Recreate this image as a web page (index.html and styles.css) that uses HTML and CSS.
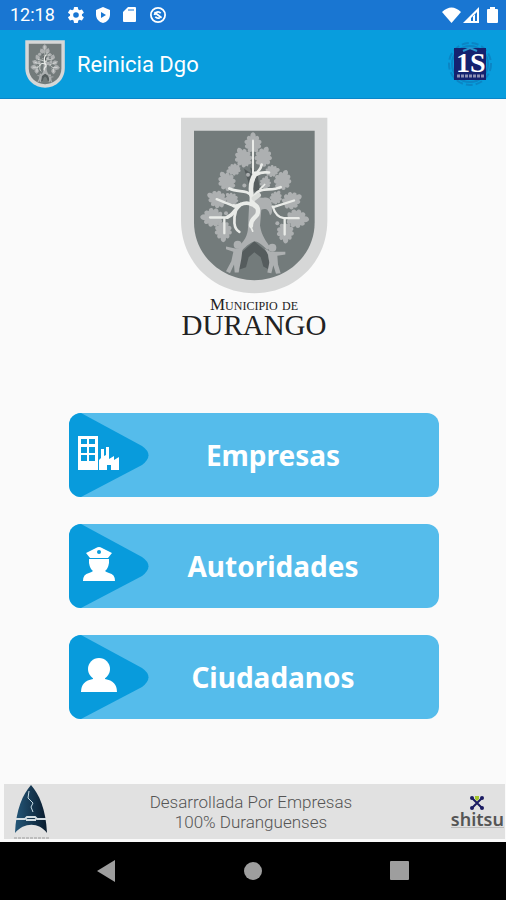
FILE: index.html
```html
<!DOCTYPE html>
<html lang="es">
<head>
    <meta charset="UTF-8">
    <meta name="viewport" content="width=device-width, initial-scale=1.0">
    <title>Reinicia Dgo</title>
    <link rel="stylesheet" href="styles.css">
</head>
<body>
    <!-- Shared drawings -->
    <svg class="defs" width="0" height="0" aria-hidden="true">
        <symbol id="leaf" viewBox="-24 -60 48 60" overflow="visible">
            <path d="M0 0 L-4 -5 C-12 0 -20 -6 -14 -14 C-23 -11 -29 -22 -20 -27 C-29 -30 -26 -42 -17 -40 C-22 -49 -13 -56 -8 -50 C-9 -58 -4 -63 0 -63 C4 -63 9 -58 8 -50 C13 -56 22 -49 17 -40 C26 -42 29 -30 20 -27 C29 -22 23 -11 14 -14 C20 -6 12 0 4 -5 Z"/>
        </symbol>
        <symbol id="shield" viewBox="30 20 444 530">
            <path fill="#d6d7d7" d="M33 22 H472 V330 C472 455 375 548 253 548 C130 548 33 455 33 330 Z"/>
            <path fill="#737b7b" d="M72 61 H434 V335 C434 435 350 509 253 509 C156 509 72 435 72 335 Z"/>
            <path fill="#555c5d" d="M222 175 L245 190 L240 170 L262 185 L270 240 L245 245 Z M200 480 L215 425 L253 392 L292 425 L302 480 L280 468 L272 440 L253 425 L236 440 L228 470 Z"/>
            <g fill="#adb0b1">
                <g transform="translate(249 128)"><use href="#leaf" x="-24" y="-60" width="48" height="60"/></g>
                <g transform="translate(234 168) rotate(-28)"><use href="#leaf" x="-24" y="-60" width="48" height="60"/></g>
                <g transform="translate(270 168) rotate(20)"><use href="#leaf" x="-24" y="-60" width="48" height="60"/></g>
                <g transform="translate(212 172) rotate(-105) scale(.7)"><use href="#leaf" x="-24" y="-60" width="48" height="60"/></g>
                <g transform="translate(286 186) rotate(78) scale(.7)"><use href="#leaf" x="-24" y="-60" width="48" height="60"/></g>
                <g transform="translate(186 238) rotate(-32)"><use href="#leaf" x="-24" y="-60" width="48" height="60"/></g>
                <g transform="translate(328 238) rotate(20)"><use href="#leaf" x="-24" y="-60" width="48" height="60"/></g>
                <g transform="translate(282 236) rotate(12) scale(.65)"><use href="#leaf" x="-24" y="-60" width="48" height="60"/></g>
                <g transform="translate(168 280) rotate(-62)"><use href="#leaf" x="-24" y="-60" width="48" height="60"/></g>
                <g transform="translate(200 280) rotate(-45) scale(.7)"><use href="#leaf" x="-24" y="-60" width="48" height="60"/></g>
                <g transform="translate(338 283) rotate(64)"><use href="#leaf" x="-24" y="-60" width="48" height="60"/></g>
                <g transform="translate(308 280) rotate(28) scale(.7)"><use href="#leaf" x="-24" y="-60" width="48" height="60"/></g>
                <g transform="translate(160 322) rotate(-88) scale(1.1)"><use href="#leaf" x="-24" y="-60" width="48" height="60"/></g>
                <g transform="translate(348 322) rotate(94) scale(1.1)"><use href="#leaf" x="-24" y="-60" width="48" height="60"/></g>
                <g transform="translate(160 332) rotate(180)"><use href="#leaf" x="-24" y="-60" width="48" height="60"/></g>
                <g transform="translate(345 336) rotate(178)"><use href="#leaf" x="-24" y="-60" width="48" height="60"/></g>
                <circle cx="234" cy="193" r="6"/>
                <circle cx="223" cy="225" r="6"/>
                <circle cx="168" cy="308" r="6"/>
                <circle cx="322" cy="338" r="6"/>
                <!-- trunk -->
                <path d="M238 270 C250 250 268 262 280 262 C300 258 304 270 306 285 C304 298 310 308 300 314 C296 296 286 292 274 298 L270 345 C274 375 290 395 302 412 L292 418 C276 402 262 392 253 392 C240 396 222 412 212 424 L204 410 C222 392 234 375 234 350 Z"/>
                <!-- children -->
                <circle cx="203" cy="403" r="12"/>
                <path d="M168 408 L196 414 L218 412 L214 445 L206 486 L194 486 L192 462 L180 488 L168 482 L184 452 L190 424 L168 416 Z"/>
                <circle cx="307" cy="412" r="12"/>
                <path d="M284 414 L302 424 L346 424 L346 432 L322 436 L324 462 L332 488 L318 490 L310 464 L304 488 L292 486 L298 456 L294 432 Z"/>
            </g>
            <g fill="none" stroke="#e9ebe8" stroke-linecap="round" stroke-linejoin="round">
                <path stroke-width="6" d="M249 90 V188"/>
                <path stroke-width="8" d="M275 162 C272 178 262 186 254 192 M262 192 C275 182 286 186 297 186"/>
                <path stroke-width="14" d="M256 190 C242 210 240 235 246 262 C244 276 250 283 258 288"/>
                <path stroke-width="13" d="M252 282 C264 288 266 300 262 312 C254 324 241 326 243 346"/>
                <path stroke-width="8" d="M246 258 C230 235 205 248 178 234 M252 258 C270 225 300 245 332 230"/>
                <path stroke-width="5" d="M270 236 L284 222 M243 350 L248 362"/>
                <path stroke-width="11" d="M244 282 C222 268 205 292 192 286 M212 282 C192 300 190 314 172 320"/>
                <path stroke-width="8" d="M198 300 C190 325 190 355 208 364"/>
                <path stroke-width="7" d="M190 286 L140 266 M172 321 L120 321 M163 325 V368 M372 270 L310 290 M308 288 C315 310 325 322 342 323 L386 323 M344 325 V372"/>
                <path stroke="#d9dcd9" stroke-width="14" d="M252 264 L266 254"/>
            </g>
        </symbol>
    </svg>

    <div class="status-bar">
        <span class="time">12:18</span>
        <div class="status-icons">
            <svg width="16" height="16" viewBox="2 2 20 20" fill="#fff"><path d="M19.4 13a7.500 7.500 0 0 0 0-2l2.100-1.600a.5.5 0 0 0 .1-.7l-2-3.400a.5.5 0 0 0-.6-.2l-2.500 1a7.300 7.300 0 0 0-1.700-1l-.4-2.600a.5.5 0 0 0-.5-.5h-4a.5.5 0 0 0-.5.5L9 5.100a7.300 7.300 0 0 0-1.700 1l-2.500-1a.5.5 0 0 0-.6.2l-2 3.400a.5.5 0 0 0 .1.700L4.600 11a7.500 7.500 0 0 0 0 2l-2.300 1.600a.5.5 0 0 0-.1.700l2 3.400c.1.200.4.300.6.200l2.500-1a7.300 7.300 0 0 0 1.700 1l.4 2.600c0 .3.200.5.5.5h4c.3 0 .5-.2.5-.5l.4-2.600a7.300 7.300 0 0 0 1.700-1l2.500 1c.2.100.5 0 .6-.2l2-3.400a.5.5 0 0 0-.1-.7zM12 15.500a3.500 3.500 0 1 1 0-7 3.500 3.500 0 0 1 0 7z"/></svg>
            <svg width="16" height="16" viewBox="0 0 16 16"><path fill="#fff" d="M8 0 L15 3 V7.500 C15 12 12 15 8 16 C4 15 1 12 1 7.500 V3 Z"/><path fill="#1976d2" d="M6 5 L11 8 L6 11 Z"/></svg>
            <svg width="16" height="16" viewBox="0 0 16 16"><path fill="#fff" d="M6 0 H13 Q14 0 14 1 V14 Q14 15 13 15 H2 Q1 15 1 14 V5 Z"/><path stroke="#1976d2" d="M7 2 V4 M9 2 V4 M11 2 V4"/></svg>
            <svg width="18" height="16" viewBox="0 0 18 18" fill="none" stroke="#fff"><circle cx="9" cy="9" r="8" stroke-width="2"/><path stroke-width="2" d="M5 9 A4 4 0 0 1 12 7 M5 6 L13 12 M6 11 A4 4 0 0 0 11 12"/></svg>
        </div>
        <div class="signal-icons">
            <svg width="19" height="16" viewBox="0 0 19 16"><path fill="#fff" d="M0 5 Q9.500 -4 19 5 L9.500 16 Z"/></svg>
            <svg width="16" height="16" viewBox="0 0 16 16"><path fill="#fff" d="M16 0 V16 H0 Z"/><path fill="#1976d2" d="M14 5 V14 H12 V8 H10 V14 H8 V11 Z"/></svg>
            <svg class="battery" width="11" height="16" viewBox="0 0 11 16"><path fill="#fff" d="M3 0 H8 V2 H10 Q11 2 11 3 V15 Q11 16 10 16 H1 Q0 16 0 15 V3 Q0 2 1 2 H3 Z"/></svg>
        </div>
    </div>

    <header class="toolbar">
        <svg class="toolbar-shield" width="40" height="48" role="img" aria-label="Durango"><use href="#shield"/></svg>
        <h1>Reinicia Dgo</h1>
        <svg class="toolbar-logo" width="44" height="44" viewBox="0 0 44 44" role="img" aria-label="1S">
            <g fill="none" stroke="#0b85c4" stroke-width="2">
                <circle cx="22" cy="22" r="21" stroke-dasharray="7 3"/>
                <circle cx="22" cy="22" r="18"/>
            </g>
            <rect x="6" y="6" width="32" height="32" fill="#15226f"/>
            <text class="logo-mark" x="8" y="30" fill="#fff">1S</text>
            <path stroke="#8d8fb5" stroke-width="3" stroke-dasharray="3 1" d="M9 34 H36"/>
            <path fill="none" stroke="#2a94cc" stroke-width="2" d="M15 9 L22 6 L29 9"/>
        </svg>
    </header>

    <main>
        <div class="brand">
            <svg width="148" height="177" role="img" aria-label="Escudo de Durango"><use href="#shield"/></svg>
            <p class="brand-top">Municipio de</p>
            <p class="brand-name">DURANGO</p>
        </div>

        <div class="menu">
            <button class="menu-button" type="button">
                <svg width="80" height="84" viewBox="0 0 80 84" aria-hidden="true">
                    <path fill="#089bdc" d="M0 0 H12 L73 33 Q86 42 73 52 L12 84 H0 Z"/>
                    <path fill="#fff" fill-rule="evenodd" d="M9 23 H29 V57 H9 Z M12 26 V31 H18 V26 Z M20 26 V31 H26 V26 Z M12 34 V40 H18 V34 Z M20 34 V40 H26 V34 Z M12 42 V48 H18 V42 Z M20 42 V48 H26 V42 Z"/>
                    <path fill="#fff" d="M30 57 V47 L32 45 V36 H35 V43 L37 42 V34 H40 V46 L45 43 V47 L50 44 V57 H42 V52 H38 V57 Z"/>
                </svg>
                <span>Empresas</span>
            </button>
            <button class="menu-button" type="button">
                <svg width="80" height="84" viewBox="0 0 80 84" aria-hidden="true">
                    <path fill="#089bdc" d="M0 0 H12 L73 33 Q86 42 73 52 L12 84 H0 Z"/>
                    <path fill="#fff" d="M17 29 L27 24 Q30 22 33 24 L43 29 L39 34 H21 Z M20 35 H40 V39 Q39 45 36 47 Q37 48 40 49 Q46 50 46 57 H14 Q14 50 20 49 Q23 48 24 47 Q21 45 20 39 Z"/>
                    <circle cx="30" cy="28" r="2" fill="#089bdc"/>
                </svg>
                <span>Autoridades</span>
            </button>
            <button class="menu-button" type="button">
                <svg width="80" height="84" viewBox="0 0 80 84" aria-hidden="true">
                    <path fill="#089bdc" d="M0 0 H12 L73 33 Q86 42 73 52 L12 84 H0 Z"/>
                    <circle cx="30" cy="34" r="11" fill="#fff"/>
                    <path fill="#fff" d="M24 41 H36 V44 Q48 46 48 57 H12 Q12 46 24 44 Z"/>
                </svg>
                <span>Ciudadanos</span>
            </button>
        </div>
    </main>

    <footer class="credits">
        <svg class="arrow-logo" width="38" height="55" viewBox="0 0 38 55" aria-hidden="true">
            <defs>
                <linearGradient id="arrow-fill" x1="0" x2="1">
                    <stop offset="0" stop-color="#245779"/>
                    <stop offset="1" stop-color="#091b2d"/>
                </linearGradient>
            </defs>
            <path fill="url(#arrow-fill)" d="M18 1 C26 10 33 25 34 49 C26 38 11 38 2 49 C3 25 10 10 18 1 Z"/>
            <path fill="none" stroke="#c8dce5" d="M16 7 L15 14 L20 19 L18 23 L20 28"/>
            <path fill="none" stroke="#d3dde2" stroke-width="2" d="M3 35 H12 L14 33 H22 L24 35 H33 M13 36 H23"/>
            <path stroke="#999" stroke-dasharray="3 1" d="M1 54 H36"/>
        </svg>
        <p>Desarrollada Por Empresas<br>100% Duranguenses</p>
        <div class="shitsu">
            <svg width="16" height="16" viewBox="0 0 16 16" aria-hidden="true">
                <path stroke="#1b1c62" stroke-width="2" d="M3 3 L13 13 M13 3 L3 13"/>
                <g fill="#1b1c62">
                    <circle cx="3" cy="3" r="2"/>
                    <circle cx="13" cy="3" r="2"/>
                    <circle cx="3" cy="13" r="2"/>
                    <circle cx="13" cy="13" r="2"/>
                </g>
                <path fill="#a4c52c" d="M6 1 H10 V4 L8 6 L6 4 Z"/>
            </svg>
            <span>shitsu</span>
        </div>
    </footer>

    <nav class="system-nav">
        <button type="button" aria-label="Atrás"><svg width="20" height="22" viewBox="0 0 20 22"><path fill="#9e9e9e" d="M19 0 V22 L1 11 Z"/></svg></button>
        <button type="button" aria-label="Inicio"><svg width="20" height="20" viewBox="0 0 20 20"><circle cx="10" cy="10" r="9" fill="#9e9e9e"/></svg></button>
        <button type="button" aria-label="Recientes"><svg width="20" height="20" viewBox="0 0 20 20"><rect width="19" height="19" rx="1" fill="#9e9e9e"/></svg></button>
    </nav>
</body>
</html>
```
FILE: styles.css
```css
* {
    box-sizing: border-box;
}

body {
    display: flex;
    flex-direction: column;
    min-height: 100vh;
    margin: 0;
    font-family: Roboto, sans-serif;
    background-color: #fafafa;
}

h1,
p {
    margin: 0;
}

svg {
    display: block;
}

button {
    padding: 0;
    border: none;
    cursor: pointer;
}

.defs {
    position: absolute;
}

.status-bar {
    display: flex;
    align-items: center;
    height: 30px;
    padding: 0 8px 0 10px;
    background-color: #1976d2;
    color: white;
}

.time {
    font-size: 18px;
    line-height: 24px;
}

.status-icons {
    display: flex;
    gap: 11px;
    margin-left: 13px;
}

.signal-icons {
    display: flex;
    gap: 2px;
    margin-left: auto;
}

.battery {
    margin-left: 6px;
}

.toolbar {
    display: flex;
    align-items: center;
    height: 69px;
    padding: 0 14px 0 25px;
    background-color: #089ddd;
    border-bottom: 1px solid #0a86c9;
    color: white;
}

.toolbar h1 {
    margin-left: 12px;
    font-size: 22px;
    font-weight: 400;
}

.toolbar-logo {
    margin-left: auto;
}

.logo-mark {
    font-family: "Liberation Serif", serif;
    font-size: 28px;
    font-weight: bold;
}

main {
    flex: 1;
    padding: 18px 67px 0 69px;
}

.brand {
    display: flex;
    flex-direction: column;
    align-items: center;
    font-family: "Liberation Serif", serif;
    color: #222;
}

.brand-top {
    margin-top: 4px;
    font-size: 17px;
    line-height: 14px;
    font-variant: small-caps;
}

.brand-name {
    font-size: 29px;
    line-height: 26px;
}

.menu {
    display: grid;
    gap: 27px;
    margin-top: 75px;
}

.menu-button {
    display: flex;
    align-items: center;
    overflow: hidden;
    padding-right: 42px;
    border-radius: 12px;
    background-color: #55bceb;
    color: white;
    font-family: "Noto Sans", sans-serif;
    font-size: 28px;
    font-weight: bold;
}

.menu-button span {
    flex: 1;
    text-align: center;
}

.credits {
    display: flex;
    align-items: center;
    justify-content: space-between;
    margin: 0 1px 3px 4px;
    padding-left: 9px;
    background-color: #e1e1e1;
}

.credits p {
    color: #555;
    font-size: 17px;
    font-weight: 300;
    line-height: 20px;
    text-align: center;
}

.shitsu {
    display: flex;
    flex-direction: column;
    align-items: center;
    padding-right: 1px;
    color: #555;
    font-family: "Noto Sans", sans-serif;
    font-size: 18px;
    font-weight: 600;
    line-height: 16px;
}

.shitsu span {
    border-bottom: 1px solid #bbb;
}

.system-nav {
    display: grid;
    grid-template-columns: repeat(3, 1fr);
    height: 58px;
    padding: 0 32px;
    background-color: black;
}

.system-nav button {
    display: flex;
    align-items: center;
    justify-content: center;
    background: none;
}
```
